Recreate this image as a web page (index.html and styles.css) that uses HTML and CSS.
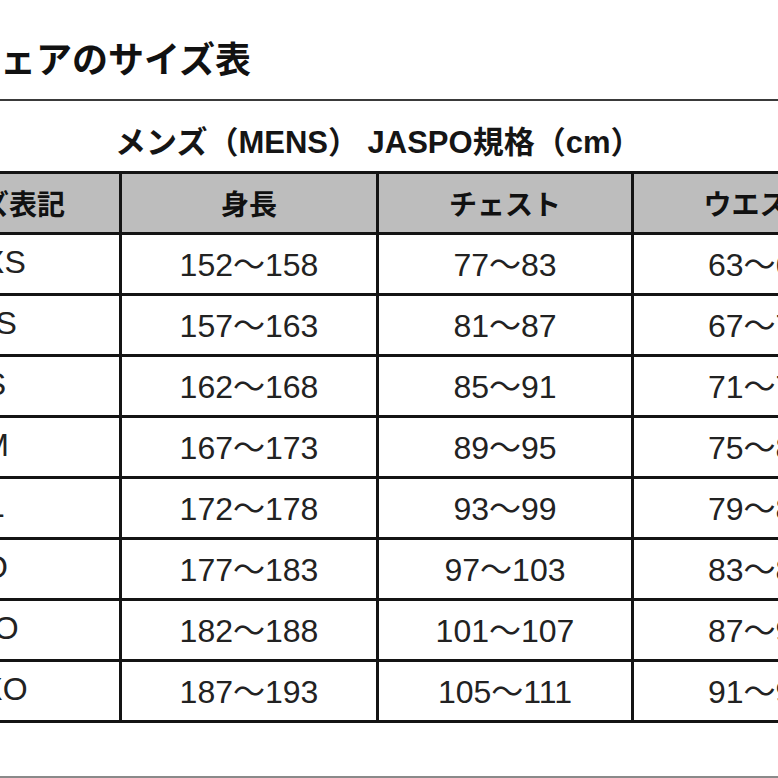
FILE: index.html
```html
<!DOCTYPE html>
<html lang="ja">
<head>
<meta charset="utf-8">
<link rel="stylesheet" href="styles.css">
</head>
<body>
<div class="page">
  <h1 class="title">ェアのサイズ表</h1>
  <div class="rule"></div>
  <h2 class="subtitle">メンズ（MENS） JASPO規格（cm）</h2>
  <table class="size-table">
    <colgroup>
      <col class="c0"><col class="c1"><col class="c2"><col class="c3">
    </colgroup>
    <thead>
      <tr><th>サイズ表記</th><th>身長</th><th>チェスト</th><th>ウエスト</th></tr>
    </thead>
    <tbody>
      <tr><td>2XS</td><td>152〜158</td><td>77〜83</td><td>63〜69</td></tr>
      <tr><td>XS</td><td>157〜163</td><td>81〜87</td><td>67〜73</td></tr>
      <tr><td>S</td><td>162〜168</td><td>85〜91</td><td>71〜77</td></tr>
      <tr><td>M</td><td>167〜173</td><td>89〜95</td><td>75〜81</td></tr>
      <tr><td>L</td><td>172〜178</td><td>93〜99</td><td>79〜85</td></tr>
      <tr><td>O</td><td>177〜183</td><td>97〜103</td><td>83〜89</td></tr>
      <tr><td>XO</td><td>182〜188</td><td>101〜107</td><td>87〜93</td></tr>
      <tr><td>2XO</td><td>187〜193</td><td>105〜111</td><td>91〜97</td></tr>
    </tbody>
  </table>
  <div class="rule rule-bottom"></div>
</div>
</body>
</html>
```

FILE: styles.css
```css
html, body {
  margin: 0;
  padding: 0;
  background: #ffffff;
}
body {
  width: 778px;
  height: 778px;
  overflow: hidden;
  font-family: "Liberation Sans", "Noto Sans CJK JP", sans-serif;
  color: #1a1a1a;
}
.page {
  display: flex;
  flex-direction: column;
}
.title {
  margin: 0;
  padding: 37px 0 0 0;
  height: 59px;
  box-sizing: border-box;
  font-family: "Noto Sans CJK JP", sans-serif;
  font-size: 36px;
  line-height: 40px;
  font-weight: 700;
  color: #111;
  white-space: nowrap;
}
.rule {
  margin-top: 40px;
  height: 2px;
  background: #3a3a3a;
  width: 100%;
}
.subtitle {
  margin: 0;
  padding: 22px 0 0 115px;
  height: 70px;
  box-sizing: border-box;
  font-size: 31px;
  line-height: 40px;
  font-weight: 700;
  color: #151515;
  white-space: nowrap;
}
.size-table {
  margin-left: -131px;
  border-collapse: collapse;
  table-layout: fixed;
  width: 1016px;
}
.c0 { width: 250px; }
.c1 { width: 257px; }
.c2 { width: 255px; }
.c3 { width: 254px; }
.size-table th,
.size-table td {
  border: 3px solid #141414;
  padding: 0;
  height: 58px;
  text-align: center;
  vertical-align: middle;
  white-space: nowrap;
}
.size-table th {
  background: #bdbdbd;
  font-family: "Noto Sans CJK JP", sans-serif;
  font-size: 28px;
  font-weight: 700;
  color: #111;
}
.size-table td {
  font-size: 32px;
  font-weight: 400;
  color: #222;
  padding-bottom: 4px;
  height: 54px;
}
.rule-bottom {
  margin-top: 53px;
  height: 2px;
  background: #8a8a8a;
}
```
